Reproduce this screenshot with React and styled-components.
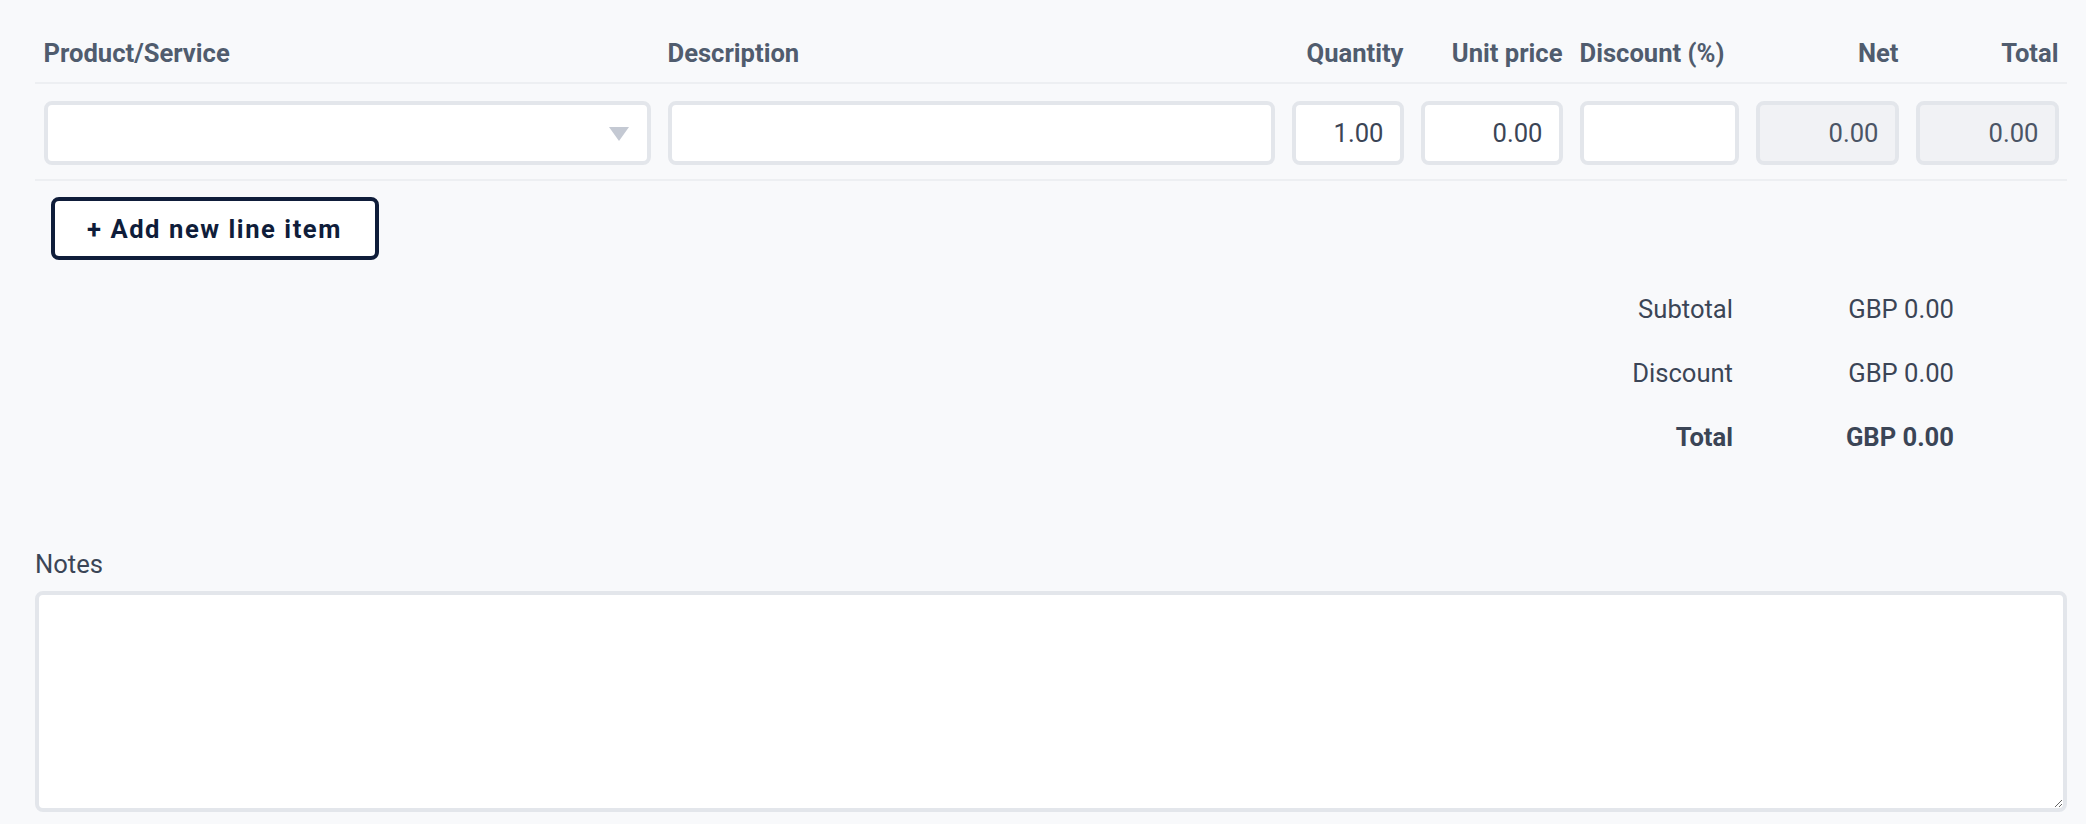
import styled, { createGlobalStyle } from 'styled-components';

const GlobalStyle = createGlobalStyle`
    * { box-sizing: border-box; }
    body {
        margin: 0;
        background: #f8f9fb;
        font-family: Roboto, "Liberation Sans", sans-serif;
        color: #3b4556;
    }
`;

const COLUMNS = [
    { key: 'product', label: 'Product/Service', align: 'left' },
    { key: 'description', label: 'Description', align: 'left' },
    { key: 'quantity', label: 'Quantity', align: 'right' },
    { key: 'unit', label: 'Unit price', align: 'right' },
    { key: 'discount', label: 'Discount (%)', align: 'left' },
    { key: 'net', label: 'Net', align: 'right' },
    { key: 'total', label: 'Total', align: 'right' },
];

const TOTALS = [
    { label: 'Subtotal', value: 'GBP 0.00' },
    { label: 'Discount', value: 'GBP 0.00' },
    { label: 'Total', value: 'GBP 0.00', strong: true },
];

const App = () => {
    return (
        <>
            <GlobalStyle />
            <Page>
                <LineTable>
                    <HeaderRow>
                        {COLUMNS.map((col) => (
                            <HeadCell key={col.key} $align={col.align}>{col.label}</HeadCell>
                        ))}
                    </HeaderRow>
                    <ItemRow>
                        <Cell>
                            <SelectWrap>
                                <Select defaultValue="">
                                    <option value=""></option>
                                </Select>
                                <Caret width="20" height="14" viewBox="0 0 20 14">
                                    <path d="M0 0 L20 0 L10 14 Z" fill="#c4c9d3" />
                                </Caret>
                            </SelectWrap>
                        </Cell>
                        <Cell><Field type="text" $align="left" /></Cell>
                        <Cell><Field type="text" defaultValue="1.00" /></Cell>
                        <Cell><Field type="text" defaultValue="0.00" /></Cell>
                        <Cell><Field type="text" /></Cell>
                        <Cell><Field type="text" value="0.00" readOnly $locked /></Cell>
                        <Cell><Field type="text" value="0.00" readOnly $locked /></Cell>
                    </ItemRow>
                </LineTable>

                <AddButton type="button">+ Add new line item</AddButton>

                <Totals>
                    {TOTALS.map((row) => (
                        <TotalRow key={row.label} $strong={row.strong}>
                            <TotalLabel>{row.label}</TotalLabel>
                            <TotalValue>{row.value}</TotalValue>
                        </TotalRow>
                    ))}
                </Totals>

                <Notes>
                    <NotesLabel htmlFor="notes">Notes</NotesLabel>
                    <NotesArea id="notes" />
                </Notes>
            </Page>
        </>
    );
};

const Page = styled.div`
    padding: 0 19px 12px 35px;
    display: flex;
    flex-direction: column;
`;

const LineTable = styled.div`
    display: flex;
    flex-direction: column;
`;

const gridCols = `1fr 1fr 129px 159px 176px 160px 160px`;

const HeaderRow = styled.div`
    display: grid;
    grid-template-columns: ${gridCols};
    padding: 34px 0 10px;
    border-bottom: 2px solid #edeff2;
`;

const HeadCell = styled.div`
    padding: 0 8.5px;
    font-size: 25.6px;
    line-height: 38.4px;
    font-weight: 700;
    color: #505c6e;
    text-align: ${(p) => p.$align};
    white-space: nowrap;
`;

const ItemRow = styled.div`
    display: grid;
    grid-template-columns: ${gridCols};
    padding: 17px 0 14px;
    border-bottom: 2px solid #edeff2;
`;

const Cell = styled.div`
    padding: 0 8.5px;
    min-width: 0;
`;

const Field = styled.input`
    width: 100%;
    height: 64px;
    border: 4px solid #e3e6eb;
    border-radius: 8px;
    background: ${(p) => (p.$locked ? '#f1f2f5' : '#fff')};
    padding: 0 16px;
    font-family: inherit;
    font-size: 25.6px;
    color: ${(p) => (p.$locked ? '#4b5566' : '#3b4556')};
    text-align: ${(p) => p.$align || 'right'};
    outline: none;
`;

const SelectWrap = styled.div`
    position: relative;
`;

const Select = styled.select`
    width: 100%;
    height: 64px;
    appearance: none;
    border: 4px solid #e3e6eb;
    border-radius: 8px;
    background: #fff;
    padding: 0 16px;
    font-family: inherit;
    font-size: 25.6px;
    outline: none;
`;

const Caret = styled.svg`
    position: absolute;
    right: 22px;
    top: 26px;
    pointer-events: none;
`;

const AddButton = styled.button`
    align-self: flex-start;
    margin: 16px 0 0 16px;
    height: 63px;
    padding: 0 33px 0 32px;
    background: #fff;
    border: 4px solid #0f1d3a;
    border-radius: 8px;
    font-family: inherit;
    font-size: 25.6px;
    font-weight: 700;
    letter-spacing: 1.55px;
    color: #0f1d3a;
    cursor: pointer;
`;

const Totals = styled.div`
    align-self: flex-end;
    margin: 17px 113px 0 0;
    display: flex;
    flex-direction: column;
`;

const TotalRow = styled.div`
    display: grid;
    grid-template-columns: 200px 221px;
    height: 64px;
    line-height: 64px;
    font-size: 25.6px;
    font-weight: ${(p) => (p.$strong ? 700 : 400)};
    color: #3b4556;
`;

const TotalLabel = styled.span`
    text-align: right;
`;

const TotalValue = styled.span`
    text-align: right;
`;

const Notes = styled.div`
    margin-top: 76px;
    display: flex;
    flex-direction: column;
`;

const NotesLabel = styled.label`
    font-size: 25.6px;
    line-height: 38.4px;
    color: #3b4556;
    margin-bottom: 7px;
`;

const NotesArea = styled.textarea`
    width: 100%;
    height: 221px;
    border: 4px solid #e3e6eb;
    border-radius: 8px;
    background: #fff;
    font-family: inherit;
    font-size: 25.6px;
    outline: none;
`;

export default App;
